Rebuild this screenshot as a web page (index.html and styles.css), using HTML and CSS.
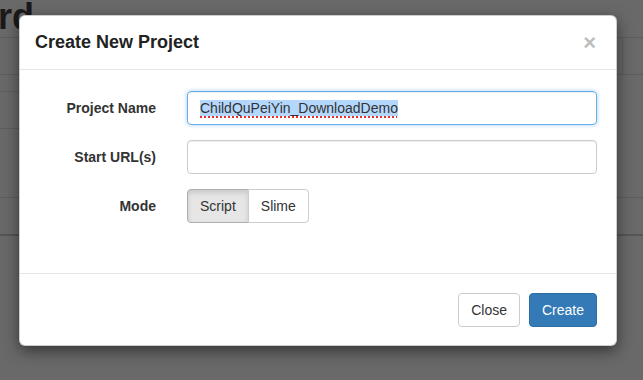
FILE: index.html
```html
<!DOCTYPE html>
<html lang="en">
<head>
<meta charset="utf-8">
<title>Create New Project</title>
<link rel="stylesheet" href="styles.css">
</head>
<body>
<div class="page">
  <div class="page-title"><span>Dashboard</span></div>
  <div class="bg-table">
    <div class="bg-row bg-head"><div class="bg-cell"></div><div class="bg-cell bg-cell-right"></div></div>
    <div class="bg-row bg-mid"><div class="bg-sub"></div></div>
    <div class="bg-row bg-last"></div>
  </div>
</div>

<div class="modal">
  <div class="modal-header">
    <h4 class="modal-title">Create New Project</h4>
    <span class="close">×</span>
  </div>
  <div class="modal-body">
    <div class="form-grid">
      <label class="form-label">Project Name</label>
      <div class="form-control focused"><span class="selected">ChildQuPeiYin_DownloadDemo</span></div>
      <label class="form-label">Start URL(s)</label>
      <div class="form-control"></div>
      <label class="form-label">Mode</label>
      <div class="btn-group">
        <span class="btn btn-default active">Script</span>
        <span class="btn btn-default">Slime</span>
      </div>
    </div>
  </div>
  <div class="modal-footer">
    <span class="btn btn-default">Close</span>
    <span class="btn btn-primary">Create</span>
  </div>
</div>
</body>
</html>
```

FILE: styles.css
```css
html, body {
  margin: 0;
  padding: 0;
}
body {
  background: #696969;
  font-family: "Liberation Sans", Arial, sans-serif;
  font-size: 14px;
  color: #333;
  width: 643px;
  height: 380px;
  overflow: hidden;
  position: relative;
}
.page-title {
  display: flex;
  justify-content: flex-end;
  width: 34px;
  height: 38px;
  font-size: 36px;
  font-weight: bold;
  line-height: 34px;
  color: #1a1a1a;
  white-space: nowrap;
}
.bg-table {
  width: 643px;
}
.bg-row {
  border-bottom: 1px solid #5d5d5d;
}
.bg-head {
  border-top: 1px solid #5d5d5d;
  height: 36px;
  display: grid;
  grid-template-columns: 1fr 21px;
  margin-top: -1px;
}
.bg-cell-right {
  border-left: 1px solid #5d5d5d;
}
.bg-mid {
  height: 123px;
  padding-top: 16px;
  box-sizing: border-box;
}
.bg-sub {
  width: 30px;
  height: 36px;
  border-top: 1px solid #5d5d5d;
  border-bottom: 1px solid #5d5d5d;
}
.bg-last {
  height: 36px;
  border-bottom: 2px solid #555;
}

.modal {
  position: absolute;
  left: 19px;
  top: 15px;
  width: 598px;
  box-sizing: border-box;
  background: #fff;
  border: 1px solid rgba(0,0,0,.2);
  border-radius: 6px;
  box-shadow: 0 5px 15px rgba(0,0,0,.5);
}
.modal-header {
  display: flex;
  justify-content: space-between;
  align-items: center;
  padding: 15px;
  border-bottom: 1px solid #e5e5e5;
}
.modal-title {
  margin: 0;
  font-size: 18px;
  line-height: 23px;
  font-weight: bold;
  color: #222;
}
.close {
  font-size: 22px;
  font-weight: bold;
  line-height: 1;
  color: #bdbdbd;
  margin-right: 5px;
}
.modal-body {
  padding: 21px 19px 50px 19px;
}
.form-grid {
  display: grid;
  grid-template-columns: 117px 1fr;
  column-gap: 31px;
  row-gap: 15px;
  align-items: center;
}
.form-label {
  text-align: right;
  font-weight: bold;
  color: #333;
}
.form-control {
  height: 34px;
  box-sizing: border-box;
  border: 1px solid #ccc;
  border-radius: 4px;
  padding: 6px 12px;
  line-height: 20px;
  box-shadow: inset 0 1px 1px rgba(0,0,0,.075);
  color: #333;
}
.form-control.focused {
  border-color: #66afe9;
  box-shadow: inset 0 1px 1px rgba(0,0,0,.075), 0 0 4px rgba(102,175,233,.6);
}
.selected {
  background: #b3d7fd;
  text-decoration: underline dotted #e03030;
  text-decoration-thickness: 2px;
  text-underline-offset: 3px;
}
.btn-group {
  display: flex;
}
.btn {
  display: inline-block;
  box-sizing: border-box;
  height: 34px;
  padding: 6px 12px;
  line-height: 20px;
  font-size: 14px;
  border: 1px solid transparent;
  border-radius: 4px;
  text-align: center;
}
.btn-default {
  background: #fff;
  border-color: #ccc;
  color: #333;
}
.btn-default.active {
  background: #e6e6e6;
  border-color: #adadad;
  box-shadow: inset 0 3px 5px rgba(0,0,0,.125);
}
.btn-group .btn:first-child {
  border-top-right-radius: 0;
  border-bottom-right-radius: 0;
}
.btn-group .btn:last-child {
  border-top-left-radius: 0;
  border-bottom-left-radius: 0;
  margin-left: -1px;
}
.btn-primary {
  background: #337ab7;
  border-color: #2e6da4;
  color: #fff;
}
.modal-footer {
  display: flex;
  justify-content: flex-end;
  gap: 9px;
  padding: 19px 19px 18px;
  border-top: 1px solid #e5e5e5;
}
```
